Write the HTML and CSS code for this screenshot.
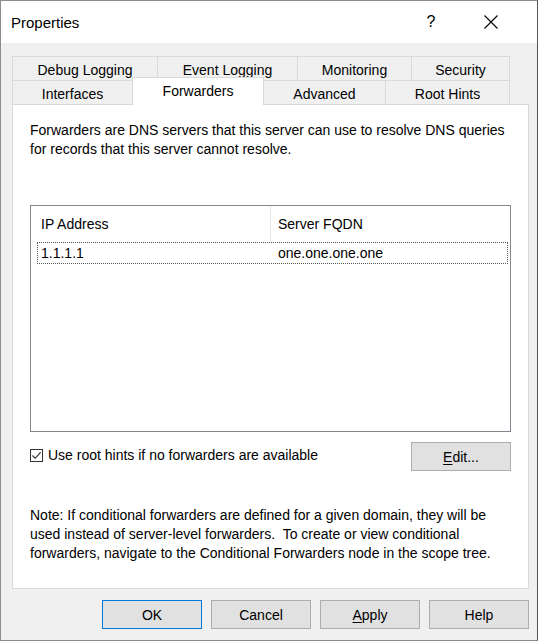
FILE: index.html
```html
<!DOCTYPE html>
<html>
<head>
<meta charset="utf-8">
<link rel="stylesheet" href="styles.css">
</head>
<body>
<div class="window">
  <div class="titlebar">
    <span class="title">Properties</span>
    <span class="cap-help">?</span>
    <span class="cap-close">
      <svg width="14" height="14" viewBox="0 0 14 14"><path d="M0.5 0.5 L13.5 13.5 M13.5 0.5 L0.5 13.5" stroke="#000" stroke-width="1.1" fill="none"/></svg>
    </span>
  </div>
  <div class="content">
    <div class="tabs">
      <div class="tabrow">
        <div class="tab w-debug">Debug Logging</div>
        <div class="tab w-event">Event Logging</div>
        <div class="tab w-mon">Monitoring</div>
        <div class="tab w-sec">Security</div>
      </div>
      <div class="tabrow">
        <div class="tab w-if">Interfaces</div>
        <div class="tab w-fwd selected">Forwarders</div>
        <div class="tab w-adv">Advanced</div>
        <div class="tab w-root">Root Hints</div>
      </div>
    </div>
    <div class="panel">
      <p class="intro">Forwarders are DNS servers that this server can use to resolve DNS queries for records that this server cannot resolve.</p>
      <div class="list">
        <div class="list-head">
          <div class="hcell c1">IP Address</div>
          <div class="hcell c2">Server FQDN</div>
        </div>
        <div class="list-row">
          <div class="rcell c1">1.1.1.1</div>
          <div class="rcell c2">one.one.one.one</div>
        </div>
      </div>
      <div class="opts">
        <span class="checkbox">
          <svg width="11" height="11" viewBox="0 0 11 11"><path d="M1.5 5.5 L4.2 8.3 L9.6 2.4" stroke="#222" stroke-width="1.1" fill="none"/></svg>
        </span>
        <span class="cb-label">Use root hints if no forwarders are available</span>
        <button class="btn edit"><u>E</u>dit...</button>
      </div>
      <p class="note">Note: If conditional forwarders are defined for a given domain, they will be used instead of server-level forwarders.&nbsp; To create or view conditional forwarders, navigate to the Conditional Forwarders node in the scope tree.</p>
    </div>
    <div class="buttons">
      <button class="btn default">OK</button>
      <button class="btn">Cancel</button>
      <button class="btn"><u>A</u>pply</button>
      <button class="btn">Help</button>
    </div>
  </div>
</div>
</body>
</html>
```
FILE: styles.css
```css
html, body {
  margin: 0;
  padding: 0;
  background: #ffffff;
}
body {
  font-family: "Liberation Sans", Arial, sans-serif;
  font-size: 14px;
  color: #000;
}
.window {
  box-sizing: border-box;
  width: 538px;
  height: 641px;
  border: 1px solid #8c8c8c;
  border-right-color: #555;
  background: #f0f0f0;
  display: flex;
  flex-direction: column;
}
.titlebar {
  height: 42px;
  background: #fff;
  display: flex;
  align-items: center;
  padding-left: 10px;
  flex: none;
}
.title {
  font-size: 15px;
  flex: 1;
}
.cap-help {
  width: 46px;
  text-align: center;
  font-size: 16px;
  margin-right: 14px;
}
.cap-close {
  width: 46px;
  display: flex;
  justify-content: center;
  margin-right: 23px;
}
.content {
  padding: 13px 8px 0 11px;
}
.tabrow {
  display: flex;
  height: 24px;
}
.tab {
  box-sizing: border-box;
  height: 24px;
  border: 1px solid #d9d9d9;
  border-bottom: none;
  margin-left: -1px;
  display: flex;
  align-items: center;
  justify-content: center;
  padding-top: 2px;
  background: #f0f0f0;
}
.tab:first-child {
  margin-left: 0;
}
.w-debug { width: 146px; }
.w-event { width: 141px; }
.w-mon { width: 115px; }
.w-sec { width: 99px; }
.w-if { width: 121px; }
.w-fwd { width: 132px; }
.w-adv { width: 123px; }
.w-root { width: 125px; }
.tab.selected {
  background: #fff;
  height: 28px;
  margin-top: -3px;
  padding-top: 0;
  padding-bottom: 1px;
  position: relative;
  z-index: 1;
}
.panel {
  box-sizing: border-box;
  width: 517px;
  height: 485px;
  background: #fff;
  border: 1px solid #d9d9d9;
  padding: 16px 17px 0 17px;
}
.intro, .note {
  margin: 0;
  line-height: 19px;
}
.list {
  box-sizing: border-box;
  margin-top: 46px;
  height: 227px;
  border: 1px solid #828790;
}
.list-head {
  display: flex;
  height: 36px;
}
.hcell {
  display: flex;
  align-items: center;
}
.hcell.c1 {
  box-sizing: border-box;
  width: 240px;
  padding-left: 10px;
  border-right: 1px solid #e5e5e5;
}
.hcell.c2 {
  padding-left: 7px;
}
.list-row {
  box-sizing: border-box;
  display: flex;
  align-items: center;
  height: 22px;
  width: 471px;
  margin-left: 6px;
  border: 1px dotted #555;
}
.rcell.c1 {
  box-sizing: border-box;
  width: 240px;
  padding-left: 3px;
}
.opts {
  display: flex;
  align-items: center;
  margin-top: 10px;
  height: 29px;
}
.checkbox {
  box-sizing: border-box;
  width: 13px;
  height: 13px;
  border: 1px solid #333;
  display: flex;
  align-items: center;
  justify-content: center;
  margin-bottom: 2px;
}
.cb-label {
  margin-left: 5px;
  margin-bottom: 3px;
}
.btn {
  box-sizing: border-box;
  font-family: "Liberation Sans", Arial, sans-serif;
  font-size: 14px;
  color: #000;
  background: #e1e1e1;
  border: 1px solid #adadad;
  width: 100px;
  height: 29px;
  padding: 0;
  margin: 0;
}
.btn u {
  text-decoration-thickness: 1px;
  text-underline-offset: 2px;
}
.edit {
  margin-left: auto;
}
.note {
  margin-top: 35px;
}
.buttons {
  display: flex;
  justify-content: flex-end;
  gap: 9px;
  margin-top: 11px;
}
.btn.default {
  border-color: #0078d7;
}
```
